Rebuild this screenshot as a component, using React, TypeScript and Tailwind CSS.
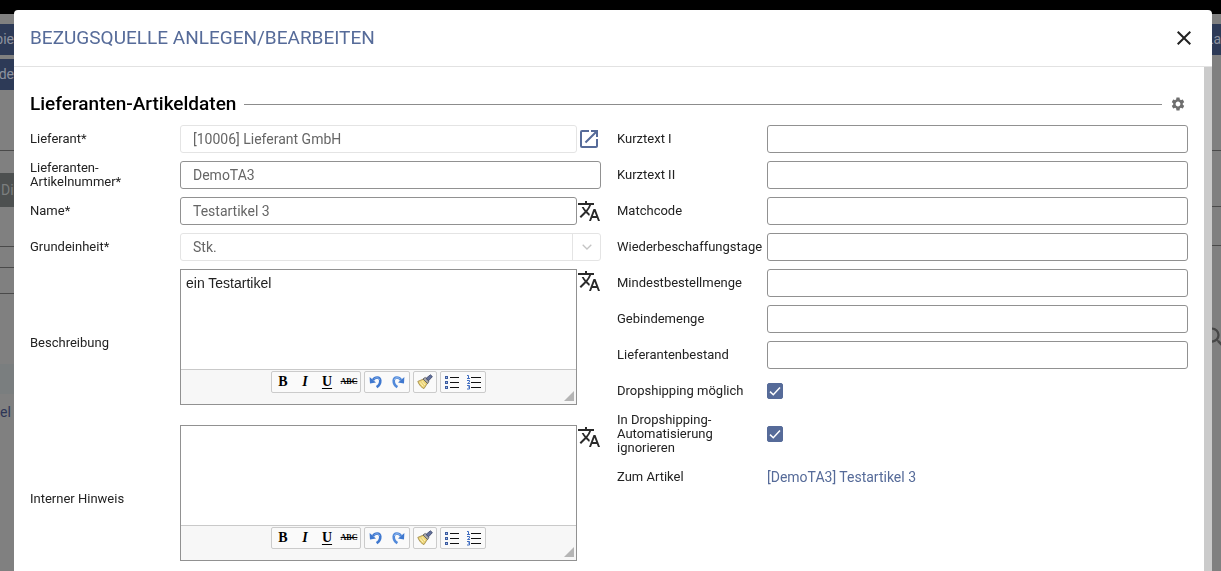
import React from 'react';
import { MdClose, MdOpenInNew, MdSearch, MdSettings, MdTranslate } from 'react-icons/md';

interface FieldProps {
  id: string;
  label: string;
  tall?: boolean;
  children: React.ReactNode;
}

const Field: React.FC<FieldProps> = ({ id, label, tall, children }) => (
  <div className={tall ? 'flex items-center min-h-[148px]' : 'flex items-center min-h-7'}>
    <label htmlFor={id} className="w-[150px] shrink-0 text-[13px] leading-[14px] text-[#222]">
      {label}
    </label>
    <div className={tall ? 'flex flex-1 min-w-0 items-start self-stretch' : 'flex flex-1 min-w-0 items-center'}>
      {children}
    </div>
  </div>
);

interface TextInputProps {
  id: string;
  value?: string;
  disabled?: boolean;
}

const TextInput: React.FC<TextInputProps> = ({ id, value = '', disabled }) => (
  <input
    id={id}
    type="text"
    defaultValue={value}
    disabled={disabled}
    className="h-7 flex-1 min-w-0 rounded-[3px] border border-[#919191] bg-white px-3 text-sm text-[#666] disabled:border-[#e4e4e4]"
  />
);

const Checkbox: React.FC<{ id: string }> = ({ id }) => (
  <span className="grid">
    <input
      id={id}
      type="checkbox"
      defaultChecked
      className="peer col-start-1 row-start-1 size-4 appearance-none rounded-[2px] border border-[#566b99] checked:bg-[#566b99]"
    />
    <svg
      viewBox="0 0 16 16"
      className="pointer-events-none invisible col-start-1 row-start-1 size-4 fill-none stroke-white peer-checked:visible"
    >
      <path d="M3 8.6l3.3 3.2L13 4.6" strokeWidth="1.5" />
    </svg>
  </span>
);

const TranslateButton: React.FC = () => (
  <button type="button" aria-label="Übersetzen" className="shrink-0 text-[#2a2a2a]">
    <MdTranslate size={24} />
  </button>
);

const UndoIcon: React.FC = () => (
  <svg viewBox="0 0 16 16" className="size-4">
    <path d="M5 6C7 2.6 12 2.4 12.3 6.6C12.4 9.4 10.8 11.8 8.6 13.2" fill="none" stroke="#3f78cf" strokeWidth="2.6" />
    <path d="M6 5.2C8 3 11 3 11.6 6" fill="none" stroke="#8bb4ee" strokeWidth="0.8" />
    <path d="M1.6 3L2 9.4L8 8.6Z" fill="#3f78cf" />
  </svg>
);

const RedoIcon: React.FC = () => (
  <svg viewBox="0 0 16 16" className="size-4">
    <path d="M11 6C9 2.6 4 2.4 3.7 6.6C3.6 9.4 5.2 11.8 7.4 13.2" fill="none" stroke="#5189da" strokeWidth="2.6" />
    <path d="M10 5.2C8 3 5 3 4.4 6" fill="none" stroke="#a5c6f4" strokeWidth="0.8" />
    <path d="M14.4 3L14 9.4L8 8.6Z" fill="#3f78cf" />
  </svg>
);

const BrushIcon: React.FC = () => (
  <svg viewBox="0 0 16 16" className="size-4">
    <path d="M0.8 7.4L6.6 5L10.6 9L7 14.6C4.4 13.6 2 10.8 0.8 7.4Z" fill="#ecd477" stroke="#9a8340" strokeWidth="0.8" />
    <path d="M3 8.4L6.2 12.4M5 7.2L8 11" stroke="#fff6c4" strokeWidth="0.9" />
    <path d="M6 5L8.2 3.4L12 7.2L10.6 9.6Z" fill="#a9a9a9" stroke="#55555a" strokeWidth="0.8" />
    <path d="M9 4.4L13.4 0.8L15.4 2.6L11.6 6.8Z" fill="#62709b" stroke="#3a4468" strokeWidth="0.8" />
  </svg>
);

const BulletListIcon: React.FC = () => (
  <svg viewBox="0 0 16 16" className="size-4">
    <path d="M6 3.5H15M6 8.5H15M6 13.5H15" stroke="#111" />
    <path d="M1 2h3v3H1zM1 7h3v3H1zM1 12h3v3H1z" fill="#3d5c9e" />
    <path d="M2 3h1v1H2zM2 8h1v1H2zM2 13h1v1H2z" fill="#9db9ec" />
  </svg>
);

const NumberListIcon: React.FC = () => (
  <svg viewBox="0 0 16 16" className="size-4">
    <path d="M5 3.5H15M5 8.5H15M5 13.5H15" stroke="#111" />
    <path
      d="M1 1.5H2.5V4M1 4.5H4M1 6.5H3.5V8L1.5 9.5H4M1 11.5H3.5V13H2M3.5 13V15H1"
      fill="none"
      stroke="#3f6cc0"
    />
  </svg>
);

const toolGroups = [
  [
    { name: 'Fett', icon: <b>B</b> },
    { name: 'Kursiv', icon: <b className="italic">I</b> },
    { name: 'Unterstrichen', icon: <b className="underline underline-offset-2">U</b> },
    { name: 'Durchgestrichen', icon: <b className="text-[8px] line-through">ABC</b> },
  ],
  [
    { name: 'Rückgängig', icon: <UndoIcon /> },
    { name: 'Wiederholen', icon: <RedoIcon /> },
  ],
  [{ name: 'Formatierung entfernen', icon: <BrushIcon /> }],
  [
    { name: 'Aufzählung', icon: <BulletListIcon /> },
    { name: 'Nummerierung', icon: <NumberListIcon /> },
  ],
];

const Editor: React.FC<{ id: string; value?: string }> = ({ id, value = '' }) => (
  <div className="flex h-[136px] flex-1 min-w-0 flex-col border border-[#919191] bg-white">
    <textarea
      id={id}
      defaultValue={value}
      className="block min-h-0 flex-1 resize-none px-[5px] py-1 font-['Liberation_Sans',Arial,sans-serif] text-sm leading-[18px] text-[#222]"
    />
    <div className="flex h-[35px] shrink-0 border-t border-[#c9c9c9] bg-[#f7f7f7]">
      <div className="flex flex-1 items-start justify-center gap-[3px] pt-px pl-3">
        {toolGroups.map((group, i) => (
          <div key={i} className="flex rounded-[2px] border border-[#cbcbcb] bg-[#fafafa]">
            {group.map(tool => (
              <button
                key={tool.name}
                type="button"
                aria-label={tool.name}
                className="flex h-5 w-[22px] items-center justify-center font-['Liberation_Serif',serif] text-sm leading-5 text-black"
              >
                {tool.icon}
              </button>
            ))}
          </div>
        ))}
      </div>
      <svg viewBox="0 0 10 10" className="mr-[2px] mb-[3px] size-[10px] self-end fill-[#b5b5b5]">
        <path d="M10 0V10H0Z" />
      </svg>
    </div>
  </div>
);

const rightFields = [
  { id: 'kurztext1', label: 'Kurztext I' },
  { id: 'kurztext2', label: 'Kurztext II' },
  { id: 'matchcode', label: 'Matchcode' },
  { id: 'wiederbeschaffung', label: 'Wiederbeschaffungstage' },
  { id: 'mindestmenge', label: 'Mindestbestellmenge' },
  { id: 'gebinde', label: 'Gebindemenge' },
  { id: 'bestand', label: 'Lieferantenbestand' },
];

// Dimmed page that stays visible around the dialog
const Backdrop: React.FC = () => (
  <div className="flex min-h-screen flex-col bg-[#808080] text-sm text-[#8d939f]" aria-hidden="true">
    <div className="h-[14px] bg-black" />
    <div className="flex flex-1 justify-between">
      <div className="w-[14px] overflow-hidden whitespace-nowrap pt-[10px]">
        <div className="flex h-[31px] justify-end bg-[#2d3a57] leading-[31px]">bie</div>
        <div className="mt-1 flex h-[31px] justify-end bg-[#2d3a57] leading-[31px]">de</div>
        <div className="mt-[60px] h-[23px] border-t border-[#4a4a4a]" />
        <div className="h-[34px] bg-[#4d5050] pl-px leading-[34px] text-[#7c7f7f]">Di</div>
        <div className="mt-[39px] h-[21px] border-t border-[#4a4a4a]" />
        <div className="h-[27px] border-y border-[#4a4a4a]" />
        <div className="mt-[70px] h-[30px] bg-[#7a7e7f]" />
        <div className="mt-2 leading-5 text-[#2d3556]">el a</div>
      </div>
      <div className="w-[9px] overflow-hidden whitespace-nowrap pt-[10px]">
        <div className="flex h-[31px] justify-end bg-[#2d3a57] leading-[31px]">La</div>
        <div className="mt-[95px] h-14 border-t border-[#4a4a4a]" />
        <div className="h-10 border-y border-[#4a4a4a]" />
        <div className="-mr-2 mt-[78px] flex justify-end">
          <MdSearch size={28} className="shrink-0 text-[#474747]" />
        </div>
      </div>
    </div>
  </div>
);

export default function App() {
  return (
    <div className="font-[Roboto,sans-serif]">
      <Backdrop />
      <div className="fixed inset-0 flex pt-[10px] pr-[9px] pl-[14px]">
        <div
          role="dialog"
          aria-labelledby="dialog-title"
          className="flex min-w-0 flex-1 flex-col overflow-hidden rounded-t-[4px] bg-white"
        >
          <header className="flex h-[57px] shrink-0 items-center justify-between border-b border-[#e2e2e2] px-4">
            <h1 id="dialog-title" className="text-[19px] text-[#566b99]">
              BEZUGSQUELLE ANLEGEN/BEARBEITEN
            </h1>
            <button type="button" aria-label="Schließen" className="text-[#222]">
              <MdClose size={24} />
            </button>
          </header>
          <div className="flex min-h-0 flex-1">
            <form className="min-w-0 flex-1 overflow-hidden px-4 pt-6">
              <div className="flex h-[26px] items-center">
                <h2 className="text-[19px] leading-[26px] font-medium text-black">Lieferanten-Artikeldaten</h2>
                <div className="mx-2 h-px flex-1 bg-[#8c8c8c]" />
                <button type="button" aria-label="Einstellungen" className="mr-[2px] text-[#6e6e6e]">
                  <MdSettings size={16} />
                </button>
              </div>
              <div className="mt-2 grid grid-cols-2 gap-4">
                <div className="flex min-w-0 flex-col gap-2">
                  <Field id="lieferant" label="Lieferant*">
                    <TextInput id="lieferant" value="[10006] Lieferant GmbH" disabled />
                    <a href="#lieferant" aria-label="Lieferant öffnen" className="shrink-0 text-[#566b99]">
                      <MdOpenInNew size={24} />
                    </a>
                  </Field>
                  <Field id="artikelnummer" label="Lieferanten-Artikelnummer*">
                    <TextInput id="artikelnummer" value="DemoTA3" />
                  </Field>
                  <Field id="name" label="Name*">
                    <TextInput id="name" value="Testartikel 3" />
                    <TranslateButton />
                  </Field>
                  <Field id="grundeinheit" label="Grundeinheit*">
                    <div className="grid h-7 flex-1 grid-cols-[1fr_28px] rounded-[3px] border border-[#e4e4e4]">
                      <select
                        id="grundeinheit"
                        disabled
                        className="col-span-2 col-start-1 row-start-1 appearance-none px-3 text-sm text-[#666] opacity-100"
                      >
                        <option>Stk.</option>
                      </select>
                      <span className="pointer-events-none col-start-2 row-start-1 flex items-center justify-center border-l border-[#e4e4e4]">
                        <svg viewBox="0 0 10 6" className="h-[6px] w-[10px] fill-none stroke-[#c4c4c4]">
                          <path d="M0.7 0.7L5 5L9.3 0.7" strokeWidth="1.3" />
                        </svg>
                      </span>
                    </div>
                  </Field>
                  <Field id="beschreibung" label="Beschreibung" tall>
                    <Editor id="beschreibung" value="ein Testartikel" />
                    <TranslateButton />
                  </Field>
                  <Field id="hinweis" label="Interner Hinweis" tall>
                    <Editor id="hinweis" />
                    <TranslateButton />
                  </Field>
                </div>
                <div className="flex min-w-0 flex-col gap-2">
                  {rightFields.map(field => (
                    <Field key={field.id} id={field.id} label={field.label}>
                      <TextInput id={field.id} />
                    </Field>
                  ))}
                  <Field id="dropshipping" label="Dropshipping möglich">
                    <Checkbox id="dropshipping" />
                  </Field>
                  <Field id="ignorieren" label="In Dropshipping-Automatisierung ignorieren">
                    <Checkbox id="ignorieren" />
                  </Field>
                  <Field id="artikel" label="Zum Artikel">
                    <a id="artikel" href="#artikel" className="text-sm text-[#566b99]">
                      [DemoTA3] Testartikel 3
                    </a>
                  </Field>
                </div>
              </div>
            </form>
            <div className="w-2 shrink-0 bg-[#cbcbcb]" />
          </div>
        </div>
      </div>
    </div>
  );
}
